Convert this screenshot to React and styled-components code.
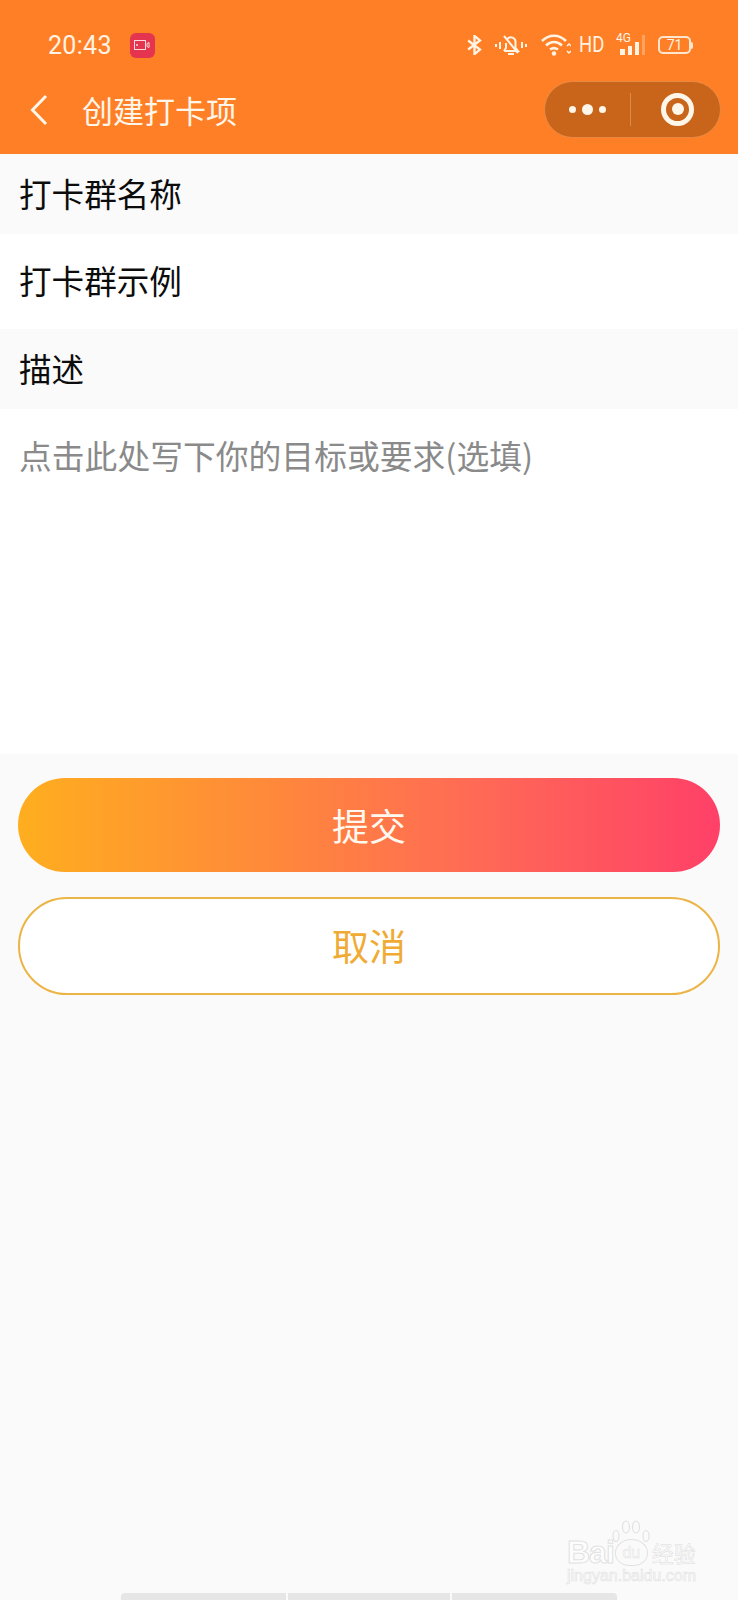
import React from 'react'
import styled, { createGlobalStyle } from 'styled-components'

const cjk = '"Noto Sans CJK SC", "Noto Sans", sans-serif'

const Global = createGlobalStyle`
  html, body { margin: 0; padding: 0; background: #fafafa; }
  * { box-sizing: border-box; }
`

const App = () => {
  return (
    <>
      <Global />
      <Page>
        <Header>
          <StatusBar>
            <StatusLeft>
              <Time>20:43</Time>
              <RecBadge>
                <svg width="16" height="10" viewBox="0 0 16 10" fill="none" stroke="#ffd9d9" strokeWidth="1">
                  <rect x="0.5" y="0.5" width="11" height="9" />
                  <circle cx="3" cy="5" r="0.6" fill="#ffd9d9" />
                  <path d="M13 3.5l2-1v5l-2-1z" />
                </svg>
              </RecBadge>
            </StatusLeft>
            <StatusRight>
              <svg width="17" height="20" viewBox="0 0 18 22" fill="none" stroke="#fff3e3" strokeWidth="2.6">
                <path d="M2 6l13 10-6 5V1l6 5L2 16" />
              </svg>
              <BellIcon width="32" height="22" viewBox="0 0 32 22" fill="none" stroke="#fff3e3" strokeWidth="2">
                <path d="M1 10v3M5 8v7M27 8v6M31 10v3" />
                <path d="M9 17h14l-2.500-3V8a4.500 4.500 0 0 0-8-3M11 9v5l-2 3M9 2l14 17M13 20h6" />
              </BellIcon>
              <WifiIcon width="30" height="22" viewBox="0 0 30 22" fill="none" stroke="#fff3e3" strokeWidth="2.6">
                <path d="M1 7c7-7 17-7 24 0M5 11.500c5-4.500 11-4.500 16 0M9 15.500c3-2 5-2 8 0" />
                <circle cx="13" cy="19.500" r="2.200" fill="#fff3e3" stroke="none" />
                <path d="M26 12l2-2 2 2M26 17l2 2 2-2" strokeWidth="1.400" />
              </WifiIcon>
              <HdLabel>HD</HdLabel>
              <SignalGroup>
                <SmallNet>4G</SmallNet>
                <Bars>
                  <SignalBar $h={6} $w={5} />
                  <SignalBar $h={9} $w={4} />
                  <SignalBar $h={13} $w={4} />
                  <SignalBar $h={20} $w={3} $dim />
                </Bars>
              </SignalGroup>
              <Battery>
                <BatteryBody>71</BatteryBody>
                <BatteryCap />
              </Battery>
            </StatusRight>
          </StatusBar>
          <NavBar>
            <BackIcon width="18" height="32" viewBox="0 0 18 32" fill="none" stroke="#fff6ea" strokeWidth="3">
              <path d="M16 2L2.500 16 16 30" />
            </BackIcon>
            <NavTitle>创建打卡项</NavTitle>
            <Capsule>
              <CapsuleSide>
                <Dots>
                  <Dot $size={7} />
                  <Dot $size={11} />
                  <Dot $size={7} />
                </Dots>
              </CapsuleSide>
              <CapsuleDivider />
              <CapsuleSide $shift={5}>
                <Ring><RingDot /></Ring>
              </CapsuleSide>
            </Capsule>
          </NavBar>
        </Header>

        <SectionLabel>打卡群名称</SectionLabel>
        <InputRow>打卡群示例</InputRow>
        <SectionLabel>描述</SectionLabel>
        <TextBlock>点击此处写下你的目标或要求(选填)</TextBlock>

        <Actions>
          <SubmitButton>提交</SubmitButton>
          <CancelButton>取消</CancelButton>
        </Actions>

        <BottomBar>
          <BarSegment $w={165} />
          <BarSegment $w={162} />
          <BarSegment $w={165} />
        </BottomBar>

        <Watermark>
          <Paw width="38" height="24" viewBox="0 0 38 24" fill="none" stroke="#e2e2e2" strokeWidth="1.200">
            <ellipse cx="4" cy="16" rx="3" ry="5.500" />
            <ellipse cx="14" cy="7" rx="3.500" ry="6" />
            <ellipse cx="24" cy="7" rx="3.500" ry="6" />
            <ellipse cx="34" cy="16" rx="3" ry="5.500" />
          </Paw>
          <MarkTop>
            <MarkLatin>Bai</MarkLatin>
            <MarkDu>du</MarkDu>
            <MarkCn>经验</MarkCn>
          </MarkTop>
          <MarkUrl>jingyan.baidu.com</MarkUrl>
        </Watermark>
      </Page>
    </>
  )
}

export default App

const Page = styled.div`
  position: relative;
  width: 738px;
  height: 1600px;
  overflow: hidden;
  display: flex;
  flex-direction: column;
  background: #fafafa;
  font-family: ${cjk};
`

const Header = styled.header`
  height: 154px;
  flex: none;
  background: #ff7f27;
  display: flex;
  flex-direction: column;
`

const StatusBar = styled.div`
  height: 78px;
  flex: none;
  padding: 12px 45px 0 48px;
  display: flex;
  align-items: center;
  justify-content: space-between;
  color: #fff3e3;
`

const StatusLeft = styled.div`
  display: flex;
  align-items: center;
  gap: 18px;
`

const Time = styled.span`
  font-family: Roboto, sans-serif;
  font-size: 25px;
  font-weight: 400;
  letter-spacing: 0.3px;
`

const RecBadge = styled.div`
  width: 25px;
  height: 25px;
  border-radius: 6px;
  background: #e4344f;
  display: flex;
  align-items: center;
  justify-content: center;
`

const StatusRight = styled.div`
  display: flex;
  align-items: center;
`

const BellIcon = styled.svg`
  margin-left: 12px;
`

const WifiIcon = styled.svg`
  margin-left: 14px;
`

const HdLabel = styled.span`
  margin-left: 8px;
  font-family: Roboto, sans-serif;
  font-size: 22px;
  font-weight: 400;
  line-height: 24px;
  transform: scaleX(0.84);
  transform-origin: left center;
  width: 25px;
`

const SignalGroup = styled.div`
  position: relative;
  margin-left: 12px;
  width: 29px;
  height: 20px;
`

const SmallNet = styled.span`
  position: absolute;
  left: 0;
  top: -3px;
  font-family: Roboto, sans-serif;
  font-size: 12px;
  line-height: 12px;
`

const Bars = styled.div`
  height: 20px;
  display: flex;
  align-items: flex-end;
  justify-content: flex-end;
  gap: 3px;
`

const SignalBar = styled.span`
  width: ${(p) => p.$w}px;
  height: ${(p) => p.$h}px;
  background: ${(p) => (p.$dim ? '#ffa35f' : '#fff3e3')};
`

const Battery = styled.div`
  margin-left: 13px;
  display: flex;
  align-items: center;
`

const BatteryBody = styled.div`
  width: 33px;
  height: 18px;
  border: 2px solid #ffe6cc;
  border-radius: 5px;
  font-family: Roboto, sans-serif;
  font-size: 14px;
  font-weight: 400;
  line-height: 14px;
  text-align: center;
`

const BatteryCap = styled.span`
  width: 2px;
  height: 7px;
  background: #ffe6cc;
  border-radius: 0 2px 2px 0;
`

const NavBar = styled.div`
  flex: 1;
  padding: 0 17px 12px 30px;
  display: flex;
  align-items: center;
`

const BackIcon = styled.svg`
  flex: none;
`

const NavTitle = styled.h1`
  margin: 0 0 0 34px;
  flex: 1;
  font-size: 31px;
  line-height: 44px;
  font-weight: 400;
  color: #fff6ea;
`

const Capsule = styled.div`
  width: 177px;
  height: 57px;
  margin-top: -2px;
  border-radius: 29px;
  background: #c9651b;
  border: 1px solid #e98a44;
  display: flex;
  align-items: center;
`

const CapsuleSide = styled.div`
  flex: 1;
  padding-left: ${(p) => p.$shift || 0}px;
  display: flex;
  justify-content: center;
  align-items: center;
`

const CapsuleDivider = styled.span`
  width: 1px;
  height: 33px;
  background: #e08a4a;
`

const Dots = styled.div`
  display: flex;
  align-items: center;
  gap: 6px;
`

const Dot = styled.span`
  width: ${(p) => p.$size}px;
  height: ${(p) => p.$size}px;
  border-radius: 50%;
  background: #fff6ea;
`

const Ring = styled.div`
  width: 33px;
  height: 33px;
  border: 5px solid #fff6ea;
  border-radius: 50%;
  display: flex;
  align-items: center;
  justify-content: center;
`

const RingDot = styled.span`
  width: 12px;
  height: 12px;
  border-radius: 50%;
  background: #fff6ea;
`

const SectionLabel = styled.div`
  height: 80px;
  flex: none;
  padding: 0 0 4px 19px;
  display: flex;
  align-items: center;
  font-size: 32.6px;
  color: #0c0c0c;
  background: #fafafa;
`

const InputRow = styled.div`
  height: 95px;
  flex: none;
  padding: 0 0 4px 19px;
  display: flex;
  align-items: center;
  font-size: 32.6px;
  color: #0c0c0c;
  background: #fff;
`

const TextBlock = styled.div`
  height: 345px;
  flex: none;
  padding: 23px 0 0 19px;
  font-size: 32.8px;
  line-height: 46px;
  color: #8a8a8a;
  background: #fff;
`

const Actions = styled.div`
  padding: 24px 18px 0;
  display: flex;
  flex-direction: column;
  gap: 25px;
`

const SubmitButton = styled.button`
  height: 94px;
  border: 0;
  border-radius: 47px;
  font-family: inherit;
  font-size: 37px;
  color: #fff8ee;
  background: linear-gradient(90deg, #ffae1f 0%, #ff8a3a 35%, #ff6a55 65%, #ff4068 100%);
`

const CancelButton = styled.button`
  height: 98px;
  padding: 0 0 2px;
  border: 2px solid #ecb445;
  border-radius: 49px;
  font-family: inherit;
  font-size: 37px;
  color: #f0ab35;
  background: #fff;
`

const BottomBar = styled.div`
  margin-top: auto;
  padding-left: 121px;
  height: 7px;
  display: flex;
  gap: 2px;
`

const BarSegment = styled.span`
  width: ${(p) => p.$w}px;
  height: 7px;
  background: #e6e6e6;
  &:first-child { border-radius: 4px 0 0 0; }
  &:last-child { border-radius: 0 4px 0 0; }
`

const Watermark = styled.div`
  position: absolute;
  left: 567px;
  top: 1520px;
  width: 132px;
`

const Paw = styled.svg`
  position: absolute;
  left: 45px;
  top: 0;
`

const MarkTop = styled.div`
  margin-top: 18px;
  height: 28px;
  display: flex;
  align-items: center;
  color: #fdfdfd;
  -webkit-text-stroke: 1px #e2e2e2;
`

const MarkLatin = styled.span`
  font-family: "Liberation Sans", sans-serif;
  font-size: 32px;
  font-weight: 700;
  line-height: 28px;
  letter-spacing: -1px;
`

const MarkDu = styled.span`
  width: 33px;
  height: 27px;
  flex: none;
  margin-left: 1px;
  border: 1px solid #e2e2e2;
  border-radius: 50% 50% 45% 45%;
  font-family: "Liberation Sans", sans-serif;
  font-size: 16px;
  line-height: 25px;
  text-align: center;
  -webkit-text-stroke: 0.5px #e2e2e2;
`

const MarkCn = styled.span`
  margin-left: 4px;
  font-size: 22px;
  line-height: 28px;
  flex: none;
  -webkit-text-stroke: 0.5px #dcdcdc;
`

const MarkUrl = styled.div`
  margin-top: 2px;
  font-family: "Liberation Sans", sans-serif;
  font-size: 16px;
  line-height: 16px;
  color: #fdfdfd;
  -webkit-text-stroke: 0.6px #e2e2e2;
`
